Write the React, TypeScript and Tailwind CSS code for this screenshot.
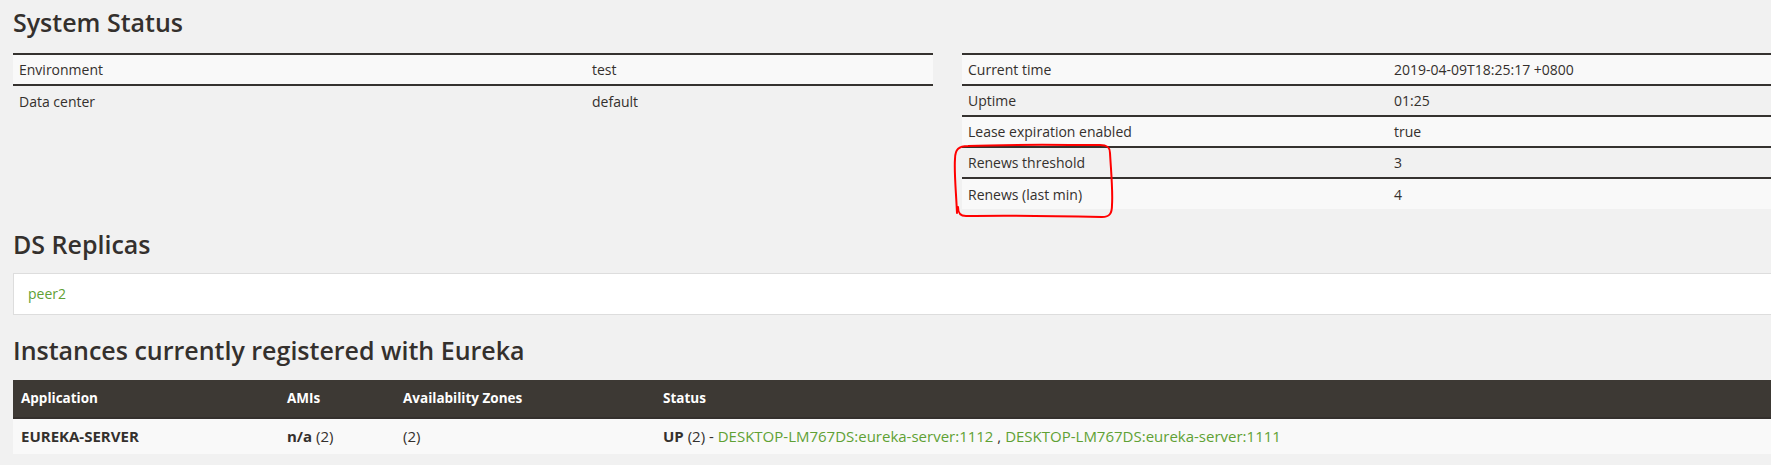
import React from 'react';

const leftRows = [
  ['Environment', 'test'],
  ['Data center', 'default'],
];

const rightRows = [
  ['Current time', '2019-04-09T18:25:17 +0800'],
  ['Uptime', '01:25'],
  ['Lease expiration enabled', 'true'],
  ['Renews threshold', '3'],
  ['Renews (last min)', '4'],
];

function StatusTable({ rows, labelWidth }: { rows: string[][]; labelWidth: string }) {
  return (
    <table className="w-[920px] border-collapse text-[14px]">
      <tbody>
        {rows.map(([label, value], i) => (
          <tr
            key={label}
            className={`border-t-2 border-[#35322f] ${i % 2 === 0 ? 'bg-[#f9f9f9]' : 'bg-[#f1f1f1]'}`}
          >
            <td className={`${labelWidth} h-[31px] px-[6px] align-middle`}>{label}</td>
            <td className="h-[31px] px-[6px] align-middle">{value}</td>
          </tr>
        ))}
      </tbody>
    </table>
  );
}

export default function App() {
  return (
    <div className="min-h-screen overflow-hidden bg-[#f1f1f1] text-[#34302d] font-['Open_Sans','Liberation_Sans',sans-serif]">
      <div className="w-[1900px] pl-[13px]">
        {/* System status */}
        <h1 className="h-[45px] text-[25px] font-semibold leading-[45px]">System Status</h1>
        <div className="mt-[8px] flex items-start gap-[29px]">
          <StatusTable rows={leftRows} labelWidth="w-[573px]" />
          <div className="relative">
            <StatusTable rows={rightRows} labelWidth="w-[426px]" />
            {/* hand drawn annotation */}
            <svg
              className="pointer-events-none absolute left-[-12px] top-[88px]"
              width="170"
              height="82"
              viewBox="0 0 170 82"
              fill="none"
            >
              <path
                d="M7 72 C6 50 4 30 5 18 C5 8 9 5 18 5 C60 3 110 4 150 4 C158 4 160 7 160 12 C161 30 163 50 162 64 C162 72 160 76 152 76 C110 75 60 74 16 75 C10 75 8 72 8 66"
                stroke="#ff0000"
                strokeWidth="2"
                strokeLinecap="round"
              />
            </svg>
          </div>
        </div>

        {/* DS Replicas */}
        <h1 className="mt-[13px] h-[44px] text-[25px] font-semibold leading-[44px]">DS Replicas</h1>
        <div className="mt-[7px] border border-[#dddddd] bg-white px-[14px] py-[10px] text-[14px] leading-[20px]">
          <a className="text-[#5fa134]">peer2</a>
        </div>

        {/* Instances */}
        <h1 className="mt-[13px] h-[44px] text-[25px] font-semibold leading-[44px]">
          Instances currently registered with Eureka
        </h1>
        <table className="mt-[8px] w-full border-collapse">
          <thead>
            <tr className="border-b-2 border-[#34302d] bg-[#3d3934] text-left text-[13.5px] text-white">
              <th className="h-[38px] w-[266px] px-[8px] font-bold">Application</th>
              <th className="h-[38px] w-[116px] px-[8px] font-bold">AMIs</th>
              <th className="h-[38px] w-[260px] px-[8px] font-bold">Availability Zones</th>
              <th className="h-[38px] px-[8px] font-bold">Status</th>
            </tr>
          </thead>
          <tbody>
            <tr className="bg-[#f9f9f9] text-[15px]">
              <td className="h-[36px] px-[8px] font-bold">EUREKA-SERVER</td>
              <td className="h-[36px] px-[8px]">
                <b>n/a</b> (2)
              </td>
              <td className="h-[36px] px-[8px]">(2)</td>
              <td className="h-[36px] px-[8px]">
                <b>UP</b> (2) -{' '}
                <a className="text-[#5fa134]">DESKTOP-LM767DS:eureka-server:1112</a> ,{' '}
                <a className="text-[#5fa134]">DESKTOP-LM767DS:eureka-server:1111</a>
              </td>
            </tr>
          </tbody>
        </table>
      </div>
    </div>
  );
}
